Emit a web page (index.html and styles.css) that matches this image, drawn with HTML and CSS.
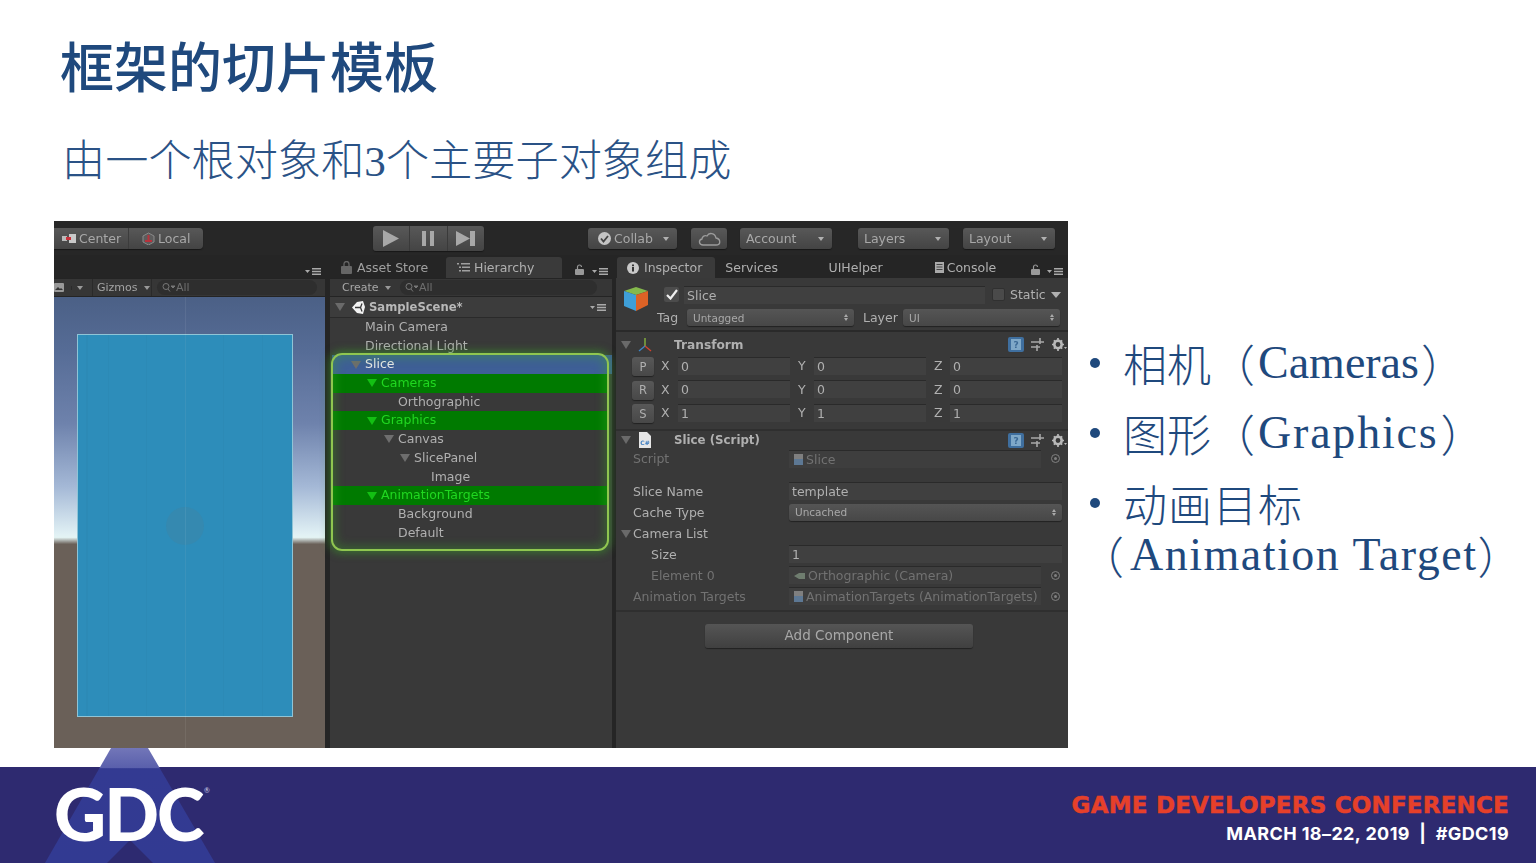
FILE: index.html
```html
<!DOCTYPE html>
<html lang="zh-CN">
<head>
<meta charset="utf-8">
<title>框架的切片模板</title>
<link rel="stylesheet" href="styles.css">
</head>
<body>
<div class="slide">
  <header class="head">
    <h1 class="title">框架的切片模板</h1>
    <p class="subtitle">由一个根对象和<span class="digit">3</span>个主要子对象组成</p>
  </header>

  <main class="content">
    <section class="unity">
      <div class="topbar">
        <div class="btn group pivot">
          <span class="seg seg-center"><svg class="ico" width="14" height="9" viewBox="0 0 14 9"><rect x="0" y="2" width="5" height="5" fill="#b9b9b9"/><rect x="7" y="0" width="7" height="9" fill="#c9c9c9"/><rect x="4" y="3" width="5" height="3" fill="#c8303a"/></svg>Center</span>
          <span class="seg seg-local"><svg class="ico" width="13" height="13" viewBox="0 0 13 13"><path d="M6.5 1 12 4v6l-5.500 3L1 10V4z" fill="#5c5c5c" stroke="#8a8a8a"/><path d="M6.500 3v6M3 9h7" stroke="#b8323c" stroke-width="2"/></svg>Local</span>
        </div>
        <div class="btn group play">
          <span class="pseg"><svg width="18" height="17" viewBox="0 0 18 17"><path d="M1 0 17 8.500 1 17z" fill="#a8a8a8"/></svg></span>
          <span class="pseg"><svg width="12" height="15" viewBox="0 0 12 15"><rect width="4" height="15" fill="#a8a8a8"/><rect x="8" width="4" height="15" fill="#a8a8a8"/></svg></span>
          <span class="pseg"><svg width="19" height="15" viewBox="0 0 19 15"><path d="M0 0 14 7.500 0 15z" fill="#a8a8a8"/><rect x="14" width="5" height="15" fill="#a8a8a8"/></svg></span>
        </div>
        <div class="btn dd collab"><svg class="ico" width="13" height="13" viewBox="0 0 13 13"><circle cx="6.500" cy="6.500" r="6.500" fill="#c4c4c4"/><path d="M3 6.500 5.500 9.500 10 4" fill="none" stroke="#444" stroke-width="1.800"/></svg>Collab<i class="caret"></i></div>
        <div class="btn cloud"><svg width="23" height="14" viewBox="0 0 23 14"><path d="M5 13h13c5 0 5-6 0-7C17 1 11 0 9 4 6 3 4 5 4 7 0 8 1 13 5 13z" fill="none" stroke="#9c9c9c" stroke-width="1.300"/></svg></div>
        <div class="btn dd account">Account<i class="caret"></i></div>
        <div class="btn dd layers">Layers<i class="caret"></i></div>
        <div class="btn dd layout">Layout<i class="caret"></i></div>
      </div>

      <div class="panels">
        <div class="panel scene">
          <div class="tabs tabs-scene">
            <svg class="menu" width="16" height="7" viewBox="0 0 16 7"><path d="M0 2h5L2.500 5z" fill="#aaa"/><path d="M7 0h9v1.400H7zM7 2.800h9v1.400H7zM7 5.600h9V7H7z" fill="#aaa"/></svg>
          </div>
          <div class="strip strip-scene">
            <span class="mini"><svg width="10" height="9" viewBox="0 0 10 9"><rect width="10" height="9" rx="1" fill="#999"/><path d="M1 7 4 4l2 2 1-1 2 2z" fill="#333"/></svg></span>
            <span class="mini mini-arrow"><i class="caret small"></i></span>
            <span class="gizmos">Gizmos<i class="caret small"></i></span>
            <span class="search search-scene"><svg width="13" height="9" viewBox="0 0 13 9"><circle cx="4" cy="3.500" r="3" fill="none" stroke="#777"/><path d="m6 6 2 2.500M9 3h4l-2 2z" stroke="#777" fill="#777"/></svg>All</span>
          </div>
          <div class="viewport">
            <div class="canvas">
              <div class="dot"></div>
            </div>
          </div>
        </div>

        <div class="panel hierarchy">
          <div class="tabs tabs-hier">
            <span class="tab-plain asset"><svg class="ico" width="11" height="13" viewBox="0 0 11 13"><path d="M3 5V3a2.500 2.500 0 0 1 5 0v2" fill="none" stroke="#666" stroke-width="1.300"/><rect y="5" width="11" height="8" rx="1" fill="#666"/></svg>Asset Store</span>
            <span class="tab-on hier-tab"><svg class="ico" width="13" height="9" viewBox="0 0 13 9"><path d="M0 0h2v1.500H0zM2 3.500h2V5H2zM2 7h2v1.500H2zM4 0h9v1.500H4zM5 3.500h8V5H5zM5 7h8v1.500H5z" fill="#a0a0a0"/></svg>Hierarchy</span>
            <svg class="lock" width="9" height="11" viewBox="0 0 9 11"><path d="M2.500 5V3a2 2 0 0 1 4 0" fill="none" stroke="#999" stroke-width="1.200"/><rect y="5" width="9" height="6" rx="1" fill="#999"/></svg>
            <svg class="menu" width="16" height="7" viewBox="0 0 16 7"><path d="M0 2h5L2.500 5z" fill="#aaa"/><path d="M7 0h9v1.400H7zM7 2.800h9v1.400H7zM7 5.600h9V7H7z" fill="#aaa"/></svg>
          </div>
          <div class="strip strip-hier">
            <span class="create">Create<i class="caret small"></i></span>
            <span class="search search-hier"><svg width="13" height="9" viewBox="0 0 13 9"><circle cx="4" cy="3.500" r="3" fill="none" stroke="#777"/><path d="m6 6 2 2.500M9 3h4l-2 2z" stroke="#777" fill="#777"/></svg>All</span>
          </div>
          <div class="scene-head">
            <i class="tri tri-big"></i>
            <svg class="unity-mark" width="13" height="13" viewBox="0 0 13 13"><path d="M0 6.500 5 1l6 -1 2 6-2 7-6-1z" fill="#f2f2f2"/><path d="M3 6.500h5.500L10 2.500M8.500 6.500 10 10.500" fill="none" stroke="#3a3a3a" stroke-width="1.300"/></svg>
            <b class="scene-name">SampleScene*</b>
            <svg class="menu-in" width="16" height="7" viewBox="0 0 16 7"><path d="M0 2h5L2.500 5z" fill="#aaa"/><path d="M7 0h9v1.400H7zM7 2.800h9v1.400H7zM7 5.600h9V7H7z" fill="#aaa"/></svg>
          </div>
          <ul class="tree">
            <li class="node l0">Main Camera</li>
            <li class="node l0">Directional Light</li>
            <li class="node l0 open selected">Slice</li>
            <li class="node l1 open marked">Cameras</li>
            <li class="node l2">Orthographic</li>
            <li class="node l1 open marked">Graphics</li>
            <li class="node l2 open">Canvas</li>
            <li class="node l3 open">SlicePanel</li>
            <li class="node l4">Image</li>
            <li class="node l1 open marked">AnimationTargets</li>
            <li class="node l2">Background</li>
            <li class="node l2">Default</li>
          </ul>
          <div class="glow"></div>
        </div>

        <div class="panel inspector">
          <div class="tabs tabs-insp">
            <span class="tab-on insp-tab"><svg class="ico" width="12" height="12" viewBox="0 0 12 12"><circle cx="6" cy="6" r="6" fill="#c8c8c8"/><rect x="5" y="5" width="2" height="4.500" fill="#333"/><rect x="5" y="2.500" width="2" height="1.700" fill="#333"/></svg>Inspector</span>
            <span class="tab-plain services">Services</span>
            <span class="tab-plain uihelper">UIHelper</span>
            <span class="tab-plain console"><svg class="ico" width="9" height="11" viewBox="0 0 9 11"><rect width="9" height="11" fill="#aaa"/><path d="M1.500 2.500h6M1.500 5h6M1.500 7.500h6" stroke="#444"/></svg>Console</span>
            <svg class="lock" width="9" height="11" viewBox="0 0 9 11"><path d="M2.500 5V3a2 2 0 0 1 4 0" fill="none" stroke="#999" stroke-width="1.200"/><rect y="5" width="9" height="6" rx="1" fill="#999"/></svg>
            <svg class="menu" width="16" height="7" viewBox="0 0 16 7"><path d="M0 2h5L2.500 5z" fill="#aaa"/><path d="M7 0h9v1.400H7zM7 2.800h9v1.400H7zM7 5.600h9V7H7z" fill="#aaa"/></svg>
          </div>

          <div class="obj">
            <svg class="cube" width="26" height="24" viewBox="0 0 26 24"><path d="M13 0 25 4 13 8 1 4z" fill="#84b84c"/><path d="M1 4 13 8v16L1 19z" fill="#3f9fd8"/><path d="M25 4 13 8v16l12-6z" fill="#dc6226"/></svg>
            <div class="obj-rows">
              <div class="obj-row">
                <span class="check"><svg width="12" height="11" viewBox="0 0 12 11"><path d="M1 6 4.500 9.500 11 1" fill="none" stroke="#f0f0f0" stroke-width="2.200"/></svg></span>
                <span class="field name-field">Slice</span>
                <span class="check check-empty"></span>
                <span class="static">Static</span>
                <i class="tri tri-static"></i>
              </div>
              <div class="obj-row">
                <span class="tag-label">Tag</span>
                <span class="select sel-tag">Untagged<i class="updown"></i></span>
                <span class="layer-label">Layer</span>
                <span class="select sel-layer">UI<i class="updown"></i></span>
              </div>
            </div>
          </div>

          <div class="comp-head comp-transform">
            <i class="tri"></i>
            <svg class="comp-ico" width="16" height="16" viewBox="0 0 16 16"><path d="M8 9V1" stroke="#8dbb3e" stroke-width="1.300"/><path d="M8 9 2 14" stroke="#3f86c8" stroke-width="1.300"/><path d="M8 9l6 5" stroke="#d2432f" stroke-width="1.300"/></svg>
            <b class="comp-name">Transform</b>
            <svg class="help" width="16" height="15" viewBox="0 0 16 15"><rect width="16" height="15" rx="2" fill="#3f6f9f"/><rect x="3" y="2" width="10" height="11" fill="#7fa8c8"/><text x="8" y="11" text-anchor="middle" class="help-q">?</text></svg>
            <svg class="slider" width="13" height="13" viewBox="0 0 13 13"><path d="M0 4h13M0 9h9M9 0v6M6 7v6" stroke="#a8a8a8" stroke-width="1.600" fill="none"/></svg>
            <svg class="gear" width="15" height="13" viewBox="0 0 15 13"><circle cx="6" cy="6.500" r="3.700" fill="none" stroke="#b8b8b8" stroke-width="2.600"/><path d="M6 0v2M6 11v2M0 6.500h2M10 6.500h2M1.800 2.300l1.400 1.400M8.800 9.300l1.400 1.400M1.800 10.700l1.400-1.400M8.800 3.700l1.400-1.400" stroke="#b8b8b8" stroke-width="1.700"/><path d="M12 9h3l-1.500 2z" fill="#b8b8b8"/></svg>
          </div>
          <div class="xyz"><span class="key">P</span><span class="axis">X</span><span class="field num">0</span><span class="axis">Y</span><span class="field num">0</span><span class="axis">Z</span><span class="field num">0</span></div>
          <div class="xyz"><span class="key">R</span><span class="axis">X</span><span class="field num">0</span><span class="axis">Y</span><span class="field num">0</span><span class="axis">Z</span><span class="field num">0</span></div>
          <div class="xyz"><span class="key">S</span><span class="axis">X</span><span class="field num">1</span><span class="axis">Y</span><span class="field num">1</span><span class="axis">Z</span><span class="field num">1</span></div>

          <div class="comp-head comp-script">
            <i class="tri"></i>
            <svg class="comp-ico" width="14" height="16" viewBox="0 0 14 16"><path d="M1 0h8l4 4v12H1z" fill="#e6e6e6"/><text x="7" y="13" text-anchor="middle" class="cs-mark">C#</text></svg>
            <b class="comp-name">Slice (Script)</b>
            <svg class="help" width="16" height="15" viewBox="0 0 16 15"><rect width="16" height="15" rx="2" fill="#3f6f9f"/><rect x="3" y="2" width="10" height="11" fill="#7fa8c8"/><text x="8" y="11" text-anchor="middle" class="help-q">?</text></svg>
            <svg class="slider" width="13" height="13" viewBox="0 0 13 13"><path d="M0 4h13M0 9h9M9 0v6M6 7v6" stroke="#a8a8a8" stroke-width="1.600" fill="none"/></svg>
            <svg class="gear" width="15" height="13" viewBox="0 0 15 13"><circle cx="6" cy="6.500" r="3.700" fill="none" stroke="#b8b8b8" stroke-width="2.600"/><path d="M6 0v2M6 11v2M0 6.500h2M10 6.500h2M1.800 2.300l1.400 1.400M8.800 9.300l1.400 1.400M1.800 10.700l1.400-1.400M8.800 3.700l1.400-1.400" stroke="#b8b8b8" stroke-width="1.700"/><path d="M12 9h3l-1.500 2z" fill="#b8b8b8"/></svg>
          </div>
          <div class="prop prop-script dim"><span class="plabel">Script</span><span class="field ref"><svg class="ico" width="9" height="11" viewBox="0 0 9 11"><rect width="9" height="11" fill="#7f7f7f"/><rect y="5" width="9" height="6" fill="#5d7894"/></svg>Slice</span><svg class="target" width="9" height="9" viewBox="0 0 9 9"><circle cx="4.500" cy="4.500" r="4" fill="none" stroke="#808080"/><circle cx="4.500" cy="4.500" r="1.500" fill="#808080"/></svg></div>
          <div class="prop prop-name"><span class="plabel">Slice Name</span><span class="field wide">template</span></div>
          <div class="prop"><span class="plabel">Cache Type</span><span class="select sel-cache">Uncached<i class="updown"></i></span></div>
          <div class="prop"><i class="tri tri-list"></i><span class="plabel list-label">Camera List</span></div>
          <div class="prop"><span class="plabel sub">Size</span><span class="field wide">1</span></div>
          <div class="prop dim"><span class="plabel sub">Element 0</span><span class="field ref"><svg class="ico" width="11" height="8" viewBox="0 0 11 8"><path d="M0 4 5 1v6zM5 1h6v6H5z" fill="#6f7d6f"/></svg>Orthographic (Camera)</span><svg class="target" width="9" height="9" viewBox="0 0 9 9"><circle cx="4.500" cy="4.500" r="4" fill="none" stroke="#808080"/><circle cx="4.500" cy="4.500" r="1.500" fill="#808080"/></svg></div>
          <div class="prop dim"><span class="plabel">Animation Targets</span><span class="field ref"><svg class="ico" width="9" height="11" viewBox="0 0 9 11"><rect width="9" height="11" fill="#7f7f7f"/><rect y="5" width="9" height="6" fill="#5d7894"/></svg>AnimationTargets (AnimationTargets)</span><svg class="target" width="9" height="9" viewBox="0 0 9 9"><circle cx="4.500" cy="4.500" r="4" fill="none" stroke="#808080"/><circle cx="4.500" cy="4.500" r="1.500" fill="#808080"/></svg></div>
          <div class="add-wrap"><span class="add">Add Component</span></div>
        </div>
      </div>
    </section>

    <ul class="points">
      <li class="point"><span class="zh">相机</span><span class="zh">（</span><span class="latin ls-cameras">Cameras</span><span class="zh close">）</span></li>
      <li class="point"><span class="zh">图形</span><span class="zh">（</span><span class="latin ls-graphics">Graphics</span><span class="zh close">）</span></li>
      <li class="point point-last"><span class="zh zh-spaced">动画目标</span></li>
      <li class="point-wrap"><span class="zh">（</span><span class="latin ls-anim">Animation Target</span><span class="zh">）</span></li>
    </ul>
  </main>

  <footer class="foot">
    <div class="logo">
      <svg class="logo-tri" width="190" height="115" viewBox="0 0 190 115">
        <defs><linearGradient id="apex" x1="0" y1="0" x2="0" y2="1"><stop offset="0" stop-color="#7276b8"/><stop offset="0.17" stop-color="#5a60ac"/><stop offset="0.18" stop-color="#333a92"/><stop offset="1" stop-color="#323a92"/></linearGradient></defs>
        <path d="M74 0h37l67 115H8z" fill="url(#apex)"/>
        <path d="M93 92 116 115H70z" fill="#2d2a70"/>
      </svg>
      <span class="gdc">GDC</span><span class="reg">®</span>
    </div>
    <div class="foot-text">
      <div class="conf">GAME DEVELOPERS CONFERENCE</div>
      <div class="dates">MARCH 18–22, 2019&nbsp; |&nbsp; #GDC19</div>
    </div>
  </footer>
</div>
</body>
</html>
```

FILE: styles.css
```css
* { box-sizing: border-box; }
html, body { margin: 0; padding: 0; background: #fff; }
body { width: 1536px; height: 863px; overflow: hidden; }
ul { margin: 0; padding: 0; list-style: none; }
svg { display: block; flex: none; }
i { font-style: normal; }

.slide { width: 1536px; height: 863px; display: flex; flex-direction: column; background: #fff; }

.head { height: 221px; padding-top: 30px; color: #1f497d; font-family: "Noto Sans CJK SC", "Liberation Serif", serif; }
.title { margin: 0 0 0 60px; font-size: 54px; line-height: 70px; font-weight: 500; }
.subtitle { margin: 29px 0 0 62px; font-size: 43.200px; line-height: 56px; font-weight: 300; color: #2a5286; }
.digit { font-family: "Liberation Serif", serif; }

.content { height: 527px; display: flex; flex: none; }

/* Unity editor */
.unity { width: 1014px; margin-left: 54px; height: 527px; background: #252525; display: flex; flex-direction: column; overflow: hidden; filter: blur(0.45px); font-family: "DejaVu Sans", sans-serif; font-size: 12.5px; color: #b0b0b0; }
.topbar { height: 34px; flex: none; display: flex; align-items: flex-start; padding-top: 7px; background: #272727; }
.btn { height: 21px; border-radius: 3px; background: linear-gradient(#585858, #444); box-shadow: 0 1px 1px #181818; display: flex; align-items: center; color: #a8a8a8; }
.ico { margin-right: 3px; }
.group { overflow: hidden; }
.pivot { width: 149px; border-radius: 0 4px 4px 0; }
.seg { height: 100%; display: flex; align-items: center; }
.seg-center { width: 75px; padding-left: 8px; border-right: 1px solid #3c3c3c; }
.seg-local { padding-left: 13px; }
.play { width: 111px; margin-left: 170px; height: 25px; margin-top: -2px; }
.pseg { flex: 1; height: 100%; display: flex; align-items: center; justify-content: center; border-left: 1px solid #3a3a3a; }
.pseg:first-child { border-left: 0; }
.dd { padding-left: 6px; position: relative; }
.caret { display: block; width: 0; height: 0; border: 3px solid transparent; border-top: 4px solid #b0b0b0; border-bottom: 0; position: absolute; right: 8px; top: 9px; }
.caret.small { position: static; display: inline-block; margin-left: 6px; vertical-align: middle; border-top-color: #999; }
.collab { width: 89px; margin-left: 104px; padding-left: 10px; }
.cloud { width: 36px; margin-left: 14px; justify-content: center; }
.account { width: 92px; margin-left: 13px; }
.layers { width: 91px; margin-left: 26px; }
.layout { width: 92px; margin-left: 14px; }

.panels { flex: 1; display: flex; min-height: 0; }
.panel { display: flex; flex-direction: column; position: relative; background: #393939; }
.scene { width: 271px; }
.hierarchy { width: 282px; margin-left: 5px; }
.inspector { width: 452px; margin-left: 4px; }

.tabs { height: 23px; flex: none; background: #252525; display: flex; align-items: flex-end; }
.tabs-scene { justify-content: flex-end; padding: 0 4px 3px 0; }
.menu { margin-bottom: 0; }
.tab-plain { display: flex; align-items: center; height: 21px; }
.tab-on { display: flex; align-items: center; height: 21px; background: #3a3a3a; border-radius: 3px 3px 0 0; }
.asset { margin-left: 11px; width: 105px; color: #a0a0a0; }
.asset .ico { margin-right: 5px; }
.hier-tab { width: 116px; padding-left: 11px; }
.hier-tab .ico { margin-right: 4px; }
.tabs-hier .lock { margin: 0 0 3px 13px; }
.tabs-hier .menu { margin: 0 3px 3px 8px; }

.strip { height: 19px; flex: none; background: #363636; border-bottom: 1px solid #242424; border-top: 1px solid #242424; display: flex; align-items: center; font-size: 11px; }
.mini { width: 11px; display: flex; }
.mini-arrow { width: 17px; padding-left: 5px; margin-left: 6px; border-left: 1px solid #2a2a2a; }
.mini-arrow .caret { margin: 0; }
.gizmos { width: 60px; margin-left: 4px; padding-left: 4px; border-left: 1px solid #2a2a2a; border-right: 1px solid #2a2a2a; line-height: 17px; color: #a4a4a4; }
.search { display: flex; align-items: center; height: 15px; border-radius: 8px; background: #2e2e2e; color: #6e6e6e; padding-left: 5px; }
.search svg { margin-right: 1px; }
.search-scene { width: 160px; margin-left: 5px; }
.strip-hier { padding-left: 12px; }
.create { width: 58px; color: #a8a8a8; }
.search-hier { width: 197px; }

.viewport { flex: 1; background: linear-gradient(#4b6086 0, #566c96 12%, #6e82ac 28%, #a4b8d6 42%, #e0f0f4 52.500%, #e4f4f4 53.300%, #6a6058 54.800%, #6a6058 100%); padding: 37px 0 0 23px; position: relative; }
.viewport::after { content: ""; position: absolute; left: 131px; top: 0; bottom: 0; width: 1px; background: rgba(255, 255, 255, .07); }
.canvas { width: 216px; height: 383px; background-color: #2d8dba; background-image: repeating-linear-gradient(90deg, rgba(0, 0, 0, .02) 0 1px, transparent 1px 38.500px); background-position: 30px 0; border: 1px solid #8fc4d6; display: flex; align-items: center; justify-content: center; }
.dot { width: 38px; height: 38px; border-radius: 50%; background: #3589b0; }

.scene-head { height: 21px; flex: none; display: flex; align-items: center; background: #3c3c3c; border-bottom: 1px solid #2a2a2a; padding-left: 5px; }
.tri { display: block; flex: none; width: 0; height: 0; border-style: solid; border-width: 8px 5px 0; border-color: #6a6a6a transparent transparent; }
.tri-big { margin-right: 7px; }
.unity-mark { margin-right: 4px; }
.scene-name { color: #b8b8b8; font-size: 11.600px; }
.menu-in { margin-left: auto; margin-right: 6px; }
.tree { display: block; }
.node { height: 18.700px; line-height: 18.700px; position: relative; display: flex; align-items: center; }
.l0 { padding-left: 35px; }
.l1 { padding-left: 51px; }
.l2 { padding-left: 68px; }
.l3 { padding-left: 84px; }
.l4 { padding-left: 101px; }
.open::before { content: ""; width: 0; height: 0; margin-left: -14px; margin-right: 4px; border-style: solid; border-width: 8px 5px 0; border-color: #6e6e6e transparent transparent; }
.selected { background: #3e5f96; color: #e8e8e8; margin-left: 2px; padding-left: 33px; }
.marked { background: #007a00; color: #20d820; margin: 0 4px 0 2px; padding-left: 49px; }
.marked::before { border-top-color: #13c013; }
.glow { position: absolute; left: 1px; top: 98px; width: 278px; height: 198px; border: 2px solid #8fc650; border-radius: 11px; box-shadow: 0 0 8px 2px rgba(60, 170, 40, .5), inset 0 0 10px 3px rgba(60, 170, 40, .35); pointer-events: none; }

/* Inspector */
.insp-tab { width: 99px; margin-left: 1px; padding-left: 10px; }
.insp-tab .ico { margin-right: 5px; }
.services { width: 104px; margin-left: 10px; }
.uihelper { width: 107px; }
.console { width: 91px; }
.tabs-insp .lock { margin: 0 0 3px 6px; }
.tabs-insp .menu { margin: 0 5px 3px 7px; }

.field { display: flex; align-items: center; height: 18px; background: #404040; border-top: 1px solid #2a2a2a; padding-left: 3px; }
.obj { height: 54px; flex: none; display: flex; padding: 5px 0 0 7px; border-bottom: 2px solid #2a2a2a; }
.cube { margin-top: 4px; }
.obj-rows { margin-left: 1px; flex: 1; }
.obj-row { display: flex; align-items: center; height: 23px; }
.check { width: 15px; height: 15px; margin-left: 14px; background: #4c4c4c; border-radius: 2px; display: flex; align-items: center; justify-content: center; }
.name-field { width: 301px; margin-left: 5px; }
.check-empty { margin-left: 7px; background: #4a4a4a; border: 1px solid #303030; width: 13px; height: 13px; }
.static { margin-left: 5px; }
.tri-static { border-width: 6px 5px 0; border-top-color: #b0b0b0; margin-left: 5px; }
.tag-label { margin-left: 7px; width: 30px; }
.select { display: flex; align-items: center; height: 17px; border-radius: 3px; background: linear-gradient(#555, #474747); box-shadow: 0 1px 1px #222; padding-left: 6px; font-size: 10.500px; color: #a8a8a8; position: relative; }
.updown { position: absolute; right: 6px; top: 5px; width: 0; height: 0; border: 2.500px solid transparent; border-bottom: 3px solid #aaa; border-top: 0; }
.updown::after { content: ""; position: absolute; left: -2.500px; top: 4px; width: 0; height: 0; border: 2.500px solid transparent; border-top: 3px solid #aaa; border-bottom: 0; }
.sel-tag { width: 167px; }
.layer-label { margin-left: 9px; width: 40px; }
.sel-layer { width: 157px; }

.comp-head { display: flex; align-items: center; flex: none; height: 19px; margin-top: 3px; padding-left: 5px; }
.comp-head .tri { margin-right: 6px; }
.comp-ico { width: 16px; }
.comp-name { color: #b0b0b0; margin-left: 21px; font-size: 12.200px; }
.comp-name + .help { margin-left: auto; }
.help-q { font-family: "DejaVu Sans", sans-serif; font-size: 9px; fill: #3c6a96; font-weight: 700; }
.cs-mark { font-family: "DejaVu Sans", sans-serif; font-size: 6px; fill: #3f7ec0; font-weight: 700; }
.slider { margin-left: 7px; }
.gear { margin: 0 1px 0 8px; }

.xyz { display: flex; align-items: center; height: 23.500px; flex: none; padding-left: 16px; }
.key { width: 22px; height: 19px; border-radius: 3px; background: linear-gradient(#585858, #484848); box-shadow: 0 1px 1px #222; display: flex; align-items: center; justify-content: center; font-size: 11.500px; margin-right: 7px; margin-top: 2px; }
.axis { width: 17px; }
.xyz .axis:not(:nth-child(2)) { width: 16px; margin-left: 8px; }
.num { width: 112px; padding-left: 3px; }
.xyz + .comp-script { margin-top: 4px; }
.comp-script { border-top: 2px solid #2f2f2f; height: 21px; }
.comp-script .comp-ico { width: 16px; }
.comp-script .comp-name { font-size: 11.800px; }

.prop { display: flex; align-items: center; height: 21px; flex: none; padding-left: 17px; position: relative; }
.prop .field { margin: 0; }
.plabel { width: 156px; flex: none; }
.sub { padding-left: 18px; }
.dim { color: #727272; }
.prop-script { height: 20px; margin-bottom: 12px; margin-top: -1px; }
.wide { width: 273px; }
.ref { width: 252px; padding-left: 5px; background: #3e3e3e; overflow: hidden; white-space: nowrap; }
.target { margin-left: 10px; }
.sel-cache { width: 273px; }
.tri-list { position: absolute; left: 5px; top: 7px; }
.add-wrap { margin-top: 3.500px; border-top: 2px solid #2f2f2f; padding: 12px 0 0 89px; }
.add { display: flex; align-items: center; justify-content: center; width: 268px; height: 24px; padding-bottom: 3px; border-radius: 3px; background: linear-gradient(#555, #404040); box-shadow: 0 1px 1px #222; font-size: 13.500px; color: #a8a8a8; }

/* Bullets */
.points { margin-left: 18px; padding-top: 114px; color: #1f497d; font-family: "Noto Sans CJK SC", sans-serif; font-size: 44px; font-weight: 300; }
.point { height: 70px; line-height: 56px; padding-left: 37px; position: relative; white-space: nowrap; display: flex; }
.point::before { content: ""; position: absolute; left: 4px; top: 23px; width: 10px; height: 10px; border-radius: 50%; background: #1f497d; }
.point-last { height: 55px; }
.point-wrap { height: 50px; line-height: 50px; white-space: nowrap; margin-left: -6px; display: flex; }
.latin { font-family: "Liberation Serif", serif; font-size: 46px; margin-left: 3px; }
.ls-cameras { letter-spacing: 0; }
.ls-graphics { letter-spacing: 1.800px; }
.ls-anim { letter-spacing: 1.500px; margin-left: 6px; }
.close { margin-left: 2px; }
.zh-spaced { letter-spacing: 1px; }

/* Footer */
.foot { flex: 1; margin-top: 19px; background: #2e2a70; position: relative; display: flex; justify-content: flex-end; }
.logo { position: absolute; left: 37px; top: -19px; width: 190px; height: 115px; }
.logo-tri { position: absolute; left: 0; top: 0; }
.gdc { position: absolute; left: 17px; top: 20px; font-family: "Lato", sans-serif; font-weight: 900; font-size: 72px; line-height: 90px; letter-spacing: -2px; color: #fff; }
.reg { position: absolute; left: 167px; top: 38px; font-family: "Lato", sans-serif; font-size: 7px; color: #cfd0e6; }
.foot-text { padding: 23px 27px 0 0; display: flex; flex-direction: column; align-items: flex-end; font-family: "Inter", sans-serif; }
.conf { font-family: "DejaVu Sans", sans-serif; font-size: 23px; line-height: 30px; font-weight: 700; color: #e6402a; letter-spacing: 0.2px; -webkit-text-stroke: 0.5px #e6402a; }
.dates { font-size: 18px; line-height: 24px; margin-top: 2px; font-weight: 700; letter-spacing: 0.4px; color: #fff; }
```
